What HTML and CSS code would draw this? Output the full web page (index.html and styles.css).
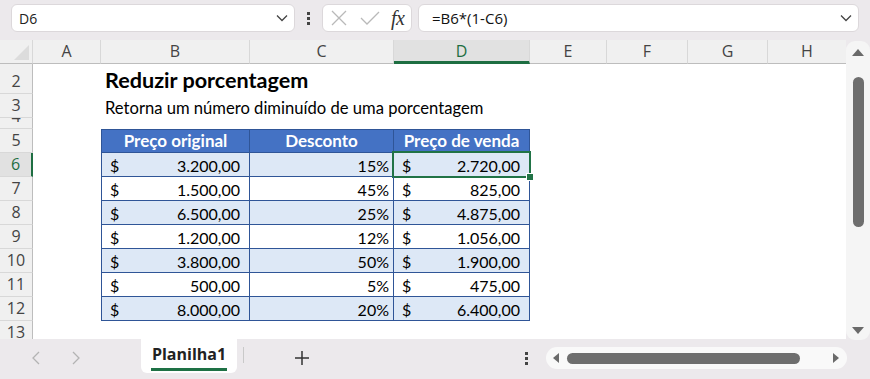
FILE: index.html
```html
<!DOCTYPE html>
<html lang="pt-BR">
<head>
    <meta charset="UTF-8">
    <title>Planilha1 - Reduzir porcentagem</title>
    <link rel="stylesheet" href="styles.css">
</head>
<body>

<div class="app">
    <div class="topbar">
        <div class="namebox">
            <span>D6</span>
            <svg class="chev" width="12" height="8" viewBox="0 0 12 8"><path d="M1 1.5 6 6.5 11 1.5" fill="none" stroke="#444" stroke-width="1.3"/></svg>
        </div>
        <div class="vdots"><i></i><i></i><i></i></div>
        <div class="fxbox">
            <svg width="16" height="16" viewBox="0 0 16 16"><path d="M1 1 15 15M15 1 1 15" stroke="#b9b9b9" stroke-width="1.3"/></svg>
            <svg width="20" height="16" viewBox="0 0 20 16"><path d="M1 8 7 14 19 2" fill="none" stroke="#b9b9b9" stroke-width="1.3"/></svg>
            <span class="fx">fx</span>
        </div>
        <div class="formula">
            <span>=B6*(1-C6)</span>
            <svg class="chev" width="12" height="8" viewBox="0 0 12 8"><path d="M1 1.5 6 6.5 11 1.5" fill="none" stroke="#444" stroke-width="1.3"/></svg>
        </div>
    </div>

    <div class="main">
        <div class="sheet">
            <div class="grid">
                <!-- column headers -->
                <div class="row">
                    <div class="corner"><span class="tri"></span></div>
                    <div class="ch">A</div>
                    <div class="ch">B</div>
                    <div class="ch">C</div>
                    <div class="ch sel">D</div>
                    <div class="ch">E</div>
                    <div class="ch">F</div>
                    <div class="ch">G</div>
                    <div class="ch last">H</div>
                </div>

                <div class="row">
                    <div class="rh">2</div><div class="c"></div>
                    <div class="c title">Reduzir porcentagem</div>
                    <div class="c"></div><div class="c"></div><div class="c"></div><div class="c"></div><div class="c"></div><div class="c"></div>
                </div>
                <div class="row">
                    <div class="rh">3</div><div class="c"></div>
                    <div class="c sub">Retorna um número diminuído de uma porcentagem</div>
                    <div class="c"></div><div class="c"></div><div class="c"></div><div class="c"></div><div class="c"></div><div class="c"></div>
                </div>
                <div class="row">
                    <div class="rh">4</div><div class="c"></div>
                    <div class="c"></div><div class="c"></div><div class="c"></div><div class="c"></div><div class="c"></div><div class="c"></div><div class="c"></div>
                </div>

                <div class="row">
                    <div class="rh">5</div><div class="c"></div>
                    <div class="c t th first">Preço original</div>
                    <div class="c t th">Desconto</div>
                    <div class="c t th">Preço de venda</div>
                    <div class="c"></div><div class="c"></div><div class="c"></div><div class="c"></div>
                </div>
                <div class="row">
                    <div class="rh sel">6</div><div class="c"></div>
                    <div class="c t alt first money"><span>$</span><span>3.200,00</span></div>
                    <div class="c t alt pct">15%</div>
                    <div class="c t alt money active"><span>$</span><span>2.720,00</span></div>
                    <div class="c"></div><div class="c"></div><div class="c"></div><div class="c"></div>
                </div>
                <div class="row">
                    <div class="rh">7</div><div class="c"></div>
                    <div class="c t first money"><span>$</span><span>1.500,00</span></div>
                    <div class="c t pct">45%</div>
                    <div class="c t money"><span>$</span><span>825,00</span></div>
                    <div class="c"></div><div class="c"></div><div class="c"></div><div class="c"></div>
                </div>
                <div class="row">
                    <div class="rh">8</div><div class="c"></div>
                    <div class="c t alt first money"><span>$</span><span>6.500,00</span></div>
                    <div class="c t alt pct">25%</div>
                    <div class="c t alt money"><span>$</span><span>4.875,00</span></div>
                    <div class="c"></div><div class="c"></div><div class="c"></div><div class="c"></div>
                </div>
                <div class="row">
                    <div class="rh">9</div><div class="c"></div>
                    <div class="c t first money"><span>$</span><span>1.200,00</span></div>
                    <div class="c t pct">12%</div>
                    <div class="c t money"><span>$</span><span>1.056,00</span></div>
                    <div class="c"></div><div class="c"></div><div class="c"></div><div class="c"></div>
                </div>
                <div class="row">
                    <div class="rh">10</div><div class="c"></div>
                    <div class="c t alt first money"><span>$</span><span>3.800,00</span></div>
                    <div class="c t alt pct">50%</div>
                    <div class="c t alt money"><span>$</span><span>1.900,00</span></div>
                    <div class="c"></div><div class="c"></div><div class="c"></div><div class="c"></div>
                </div>
                <div class="row">
                    <div class="rh">11</div><div class="c"></div>
                    <div class="c t first money"><span>$</span><span>500,00</span></div>
                    <div class="c t pct">5%</div>
                    <div class="c t money"><span>$</span><span>475,00</span></div>
                    <div class="c"></div><div class="c"></div><div class="c"></div><div class="c"></div>
                </div>
                <div class="row">
                    <div class="rh">12</div><div class="c"></div>
                    <div class="c t alt first money"><span>$</span><span>8.000,00</span></div>
                    <div class="c t alt pct">20%</div>
                    <div class="c t alt money"><span>$</span><span>6.400,00</span></div>
                    <div class="c"></div><div class="c"></div><div class="c"></div><div class="c"></div>
                </div>
                <div class="row">
                    <div class="rh">13</div><div class="c"></div>
                    <div class="c"></div><div class="c"></div><div class="c"></div><div class="c"></div><div class="c"></div><div class="c"></div><div class="c"></div>
                </div>
            </div>
        </div>

        <div class="vscroll">
            <span class="arrow up"></span>
            <div class="vthumb"></div>
            <span class="arrow down"></span>
        </div>
    </div>

    <div class="bottombar">
        <div class="nav">
            <svg width="8" height="14" viewBox="0 0 8 14"><path d="M7 1 1 7 7 13" fill="none" stroke="#b3b3b3" stroke-width="1.3"/></svg>
            <svg width="8" height="14" viewBox="0 0 8 14"><path d="M1 1 7 7 1 13" fill="none" stroke="#b3b3b3" stroke-width="1.3"/></svg>
        </div>
        <div class="tab"><span>Planilha1</span></div>
        <div class="tabsep"></div>
        <div class="plus">
            <svg width="16" height="16" viewBox="0 0 16 16"><path d="M8 1V15M1 8H15" stroke="#333" stroke-width="1.5"/></svg>
        </div>
        <div class="vdots small"><i></i><i></i><i></i></div>
        <div class="hscroll">
            <span class="arrow left"></span>
            <div class="hthumb"></div>
            <span class="arrow right"></span>
        </div>
    </div>
</div>

</body>
</html>
```

FILE: styles.css
```css
body {
    margin: 0;
    font-family: "Open Sans", "Noto Sans", sans-serif;
    color: #222;
    overflow: hidden;
}
.app {
    width: 870px;
    height: 379px;
    display: flex;
    flex-direction: column;
    background: #ece9ec;
}

/* formula bar */
.topbar {
    height: 40px;
    box-sizing: border-box;
    padding: 4px 11px 0 11px;
    display: flex;
    align-items: flex-start;
}
.namebox,
.fxbox,
.formula {
    height: 28px;
    box-sizing: border-box;
    background: #fff;
    border: 1px solid #dcd8db;
    border-radius: 6px;
    display: flex;
    align-items: center;
}
.namebox {
    width: 284px;
    padding: 0 6px 0 7px;
    font-size: 14px;
    justify-content: space-between;
}
.vdots {
    width: 27px;
    display: flex;
    flex-direction: column;
    align-items: center;
    gap: 2px;
    padding-top: 8px;
}
.vdots i {
    width: 3px;
    height: 3px;
    background: #444;
}
.fxbox {
    width: 90px;
    padding: 0 6px 0 8px;
    gap: 13px;
}
.fx {
    font-family: "Liberation Serif", serif;
    font-style: italic;
    font-size: 20px;
    color: #333;
    margin-left: -2px;
    letter-spacing: -0.5px;
}
.formula {
    width: 441px;
    margin-left: 6px;
    padding: 0 6px 0 13px;
    font-size: 15px;
    justify-content: space-between;
    color: #111;
}

/* sheet */
.main {
    height: 299px;
    display: flex;
}
.sheet {
    width: 846px;
    background: #fff;
    overflow: hidden;
}
.grid {
    display: grid;
    grid-template-columns: 33px 68px 149px 144px 136px 77px 81px 80px 78px;
    grid-template-rows: 24px 30px 24px 11px repeat(9, 24px);
}
.row {
    display: contents;
}
.corner,
.ch,
.rh,
.c {
    box-sizing: border-box;
    position: relative;
}
.corner {
    background: #f0f0f0;
    border-right: 1px solid #d8d8d8;
    border-bottom: 1px solid #bdbdbd;
}
.tri {
    position: absolute;
    right: 3px;
    bottom: 3px;
    width: 0;
    height: 0;
    border-left: 15px solid transparent;
    border-bottom: 15px solid #dcdcdc;
}
.ch {
    background: #f0f0f0;
    border-right: 1px solid #d8d8d8;
    border-bottom: 1px solid #bdbdbd;
    text-align: center;
    font-size: 16px;
    line-height: 23px;
    color: #444;
}
.ch.last {
    border-right: none;
}
.ch.sel {
    background: #e1e1e1;
    color: #1e6e42;
    border-bottom: 3px solid #1e6e42;
}
.rh {
    background: #f0f0f0;
    border-right: 1px solid #bdbdbd;
    border-bottom: 1px solid #d8d8d8;
    font-size: 16px;
    line-height: 22px;
    color: #444;
    text-align: center;
    overflow: hidden;
    display: flex;
    align-items: flex-end;
    justify-content: center;
    padding-bottom: 1px;
}
.rh.sel {
    background: #e1e1e1;
    color: #1e6e42;
    border-right: 2px solid #1e6e42;
}

/* cells */
.c {
    font-family: Lato, "Liberation Sans", sans-serif;
    font-size: 16px;
    color: #000;
    white-space: nowrap;
    display: flex;
    align-items: flex-end;
    padding: 0 4px 1px 4px;
}
.title {
    font-size: 21.6px;
    font-weight: 700;
    padding-bottom: 1px;
    z-index: 1;
}
.sub {
    font-size: 16.6px;
    padding-bottom: 0;
    z-index: 1;
}
.t {
    border-right: 1px solid #2f5597;
    border-bottom: 1px solid #2f5597;
}
.first {
    border-left: 1px solid #2f5597;
}
.th {
    border-top: 1px solid #2f5597;
    background: #4472c4;
    color: #fff;
    font-size: 17px;
    font-weight: 700;
    justify-content: center;
}
.alt {
    background: #dde8f6;
}
.money {
    justify-content: space-between;
    padding: 0 9px 1px 8px;
}
.pct {
    justify-content: flex-end;
    padding-right: 4px;
}
.active::after {
    content: "";
    position: absolute;
    left: -2px;
    top: -2px;
    right: -2px;
    bottom: -2px;
    border: 2px solid #217346;
}
.active::before {
    content: "";
    position: absolute;
    right: -5px;
    bottom: -5px;
    width: 6px;
    height: 6px;
    background: #217346;
    border: 1px solid #fff;
    z-index: 2;
}

/* scroll bars */
.vscroll {
    width: 24px;
    margin-top: 1px;
    height: 299px;
    box-sizing: border-box;
    background: #f5f5f5;
    border-radius: 9px;
    display: flex;
    flex-direction: column;
    align-items: center;
}
.vthumb {
    width: 11px;
    height: 150px;
    margin: 21px 0 auto;
    background: #6e6e6e;
    border-radius: 6px;
}
.arrow {
    width: 0;
    height: 0;
}
.arrow.up {
    margin-top: 8px;
    border-left: 6px solid transparent;
    border-right: 6px solid transparent;
    border-bottom: 7px solid #6a6a6a;
}
.arrow.down {
    margin-bottom: 6px;
    border-left: 6px solid transparent;
    border-right: 6px solid transparent;
    border-top: 7px solid #6a6a6a;
}

/* bottom bar */
.bottombar {
    height: 40px;
    display: flex;
    align-items: flex-start;
}
.nav {
    width: 141px;
    display: flex;
    gap: 32px;
    padding: 12px 0 0 32px;
    box-sizing: border-box;
}
.tab {
    width: 96px;
    height: 34px;
    background: #fff;
    border-radius: 0 0 6px 6px;
    display: flex;
    justify-content: center;
}
.tab span {
    font-weight: 700;
    font-size: 16px;
    color: #222;
    line-height: 30px;
    height: 29px;
    border-bottom: 3px solid #1e7145;
    padding: 0 1px;
}
.tabsep {
    width: 1px;
    height: 16px;
    margin: 8px 0 0 6px;
    background: #c9c9c9;
}
.plus {
    width: 16px;
    margin: 10px 0 0 50px;
}
.vdots.small {
    margin-left: 208px;
    padding-top: 13px;
    width: 16px;
}
.hscroll {
    width: 301px;
    height: 22px;
    margin: 8px 0 0 12px;
    background: #f9f9f9;
    border-radius: 11px;
    display: flex;
    align-items: center;
    padding: 0 8px 0 7px;
    box-sizing: border-box;
}
.hthumb {
    width: 233px;
    height: 11px;
    margin: 0 auto 0 8px;
    background: #6e6e6e;
    border-radius: 6px;
}
.arrow.left {
    border-top: 5px solid transparent;
    border-bottom: 5px solid transparent;
    border-right: 6px solid #6a6a6a;
}
.arrow.right {
    border-top: 5px solid transparent;
    border-bottom: 5px solid transparent;
    border-left: 6px solid #6a6a6a;
}
```
